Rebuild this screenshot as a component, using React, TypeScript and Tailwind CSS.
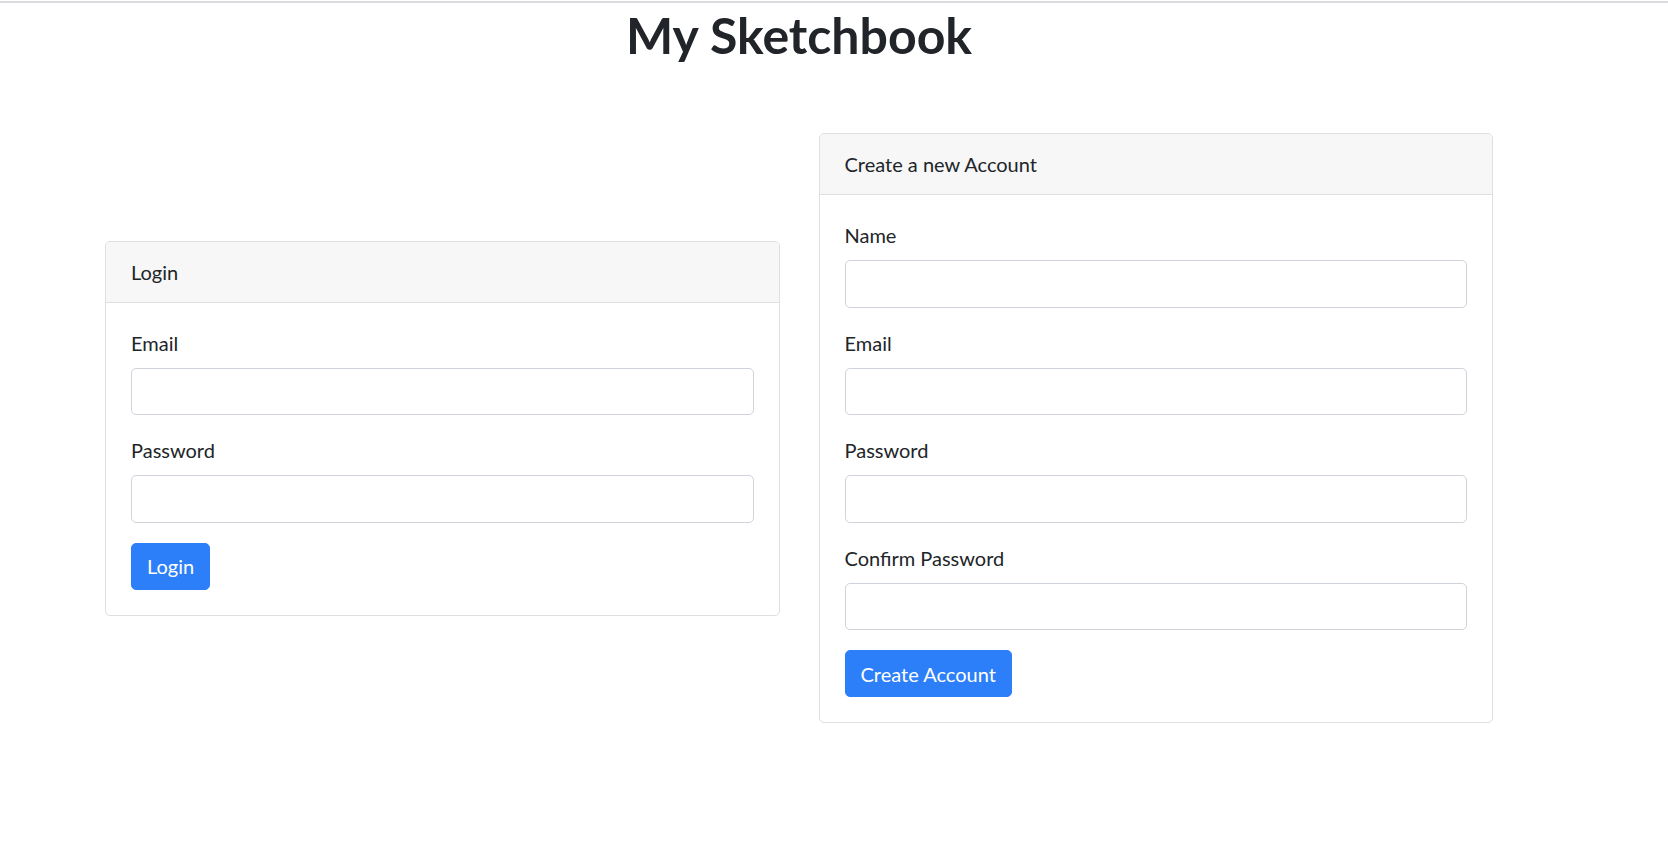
type Field = { label: string; type: string }

const loginFields: Field[] = [
  { label: "Email", type: "email" },
  { label: "Password", type: "password" },
]

const signupFields: Field[] = [
  { label: "Name", type: "text" },
  { label: "Email", type: "email" },
  { label: "Password", type: "password" },
  { label: "Confirm Password", type: "password" },
]

function FormCard({ title, fields, action }: { title: string; fields: Field[]; action: string }) {
  return (
    <div className="rounded-[5px] border border-[#dfdfdf] bg-white">
      <div className="rounded-t-[4px] border-b border-[#dfdfdf] bg-[#f7f7f7] px-[25px] py-[15px] text-[20px] leading-[30px]">
        {title}
      </div>
      <form className="p-[25px]" onSubmit={(e) => e.preventDefault()}>
        {fields.map((field) => (
          <div key={field.label} className="mb-[20px]">
            <label className="mb-[10px] block text-[20px] leading-[30px]">{field.label}</label>
            <input
              type={field.type}
              className="block h-[47.5px] w-full rounded-[5px] border border-[#ced4da] bg-white px-[15px] text-[20px] outline-none"
            />
          </div>
        ))}
        <button
          type="submit"
          className="rounded-[5px] border border-[#2d7ff9] bg-[#2d7ff9] px-[15px] py-[7.5px] text-[20px] leading-[30px] text-white"
        >
          {action}
        </button>
      </form>
    </div>
  )
}

export default function App() {
  return (
    <div className="min-h-screen bg-white text-[#212529]" style={{ fontFamily: "Lato, 'Noto Sans', sans-serif" }}>
      <div className="mt-px h-[2px] bg-[#dcdce0]" />
      <div className="w-[1493px] pl-[105px]">
        <h1 className="mt-[2px] text-center text-[50px] font-bold leading-[60px]">My Sketchbook</h1>
        <div className="mt-[68px] grid grid-cols-2 items-center gap-[39px]">
          <FormCard title="Login" fields={loginFields} action="Login" />
          <FormCard title="Create a new Account" fields={signupFields} action="Create Account" />
        </div>
      </div>
    </div>
  )
}
